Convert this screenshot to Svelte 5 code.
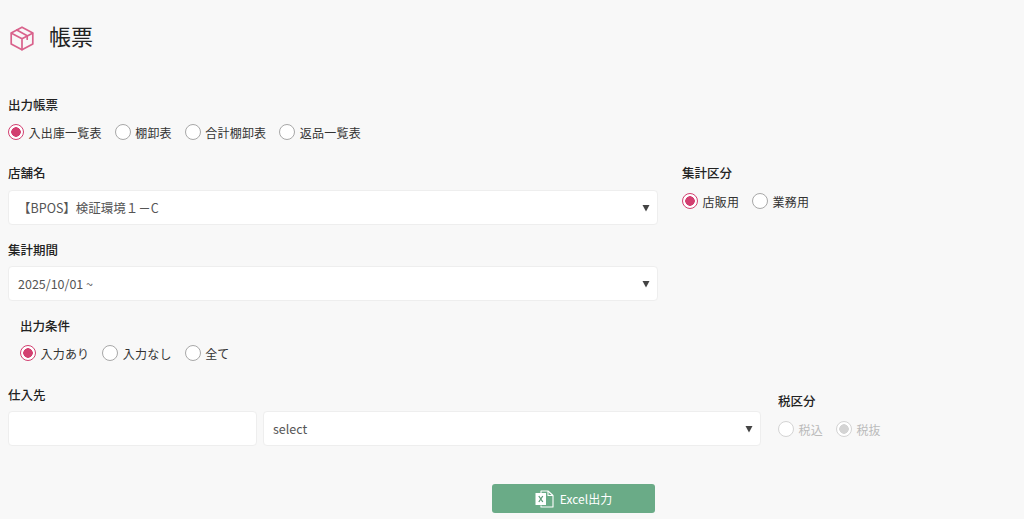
<script>
  let report = $state('inout');
  let kind = $state('store');
  let cond = $state('yes');
  let tax = $state('ex');

  const reports = [
    { id: 'inout', label: '入出庫一覧表' },
    { id: 'stock', label: '棚卸表' },
    { id: 'total', label: '合計棚卸表' },
    { id: 'return', label: '返品一覧表' }
  ];
  const kinds = [
    { id: 'store', label: '店販用' },
    { id: 'biz', label: '業務用' }
  ];
  const conds = [
    { id: 'yes', label: '入力あり' },
    { id: 'no', label: '入力なし' },
    { id: 'all', label: '全て' }
  ];
  const taxes = [
    { id: 'in', label: '税込' },
    { id: 'ex', label: '税抜' }
  ];
</script>

{#snippet radios(items, current, pick, disabled = false)}
  <div class="radios" class:disabled>
    {#each items as item}
      <button class="radio" {disabled} onclick={() => pick(item.id)}>
        <span class="dot" class:on={current === item.id}></span>
        <span>{item.label}</span>
      </button>
    {/each}
  </div>
{/snippet}

{#snippet picker(text, cls = '')}
  <div class="select {cls}">
    <span>{text}</span>
    <svg width="8" height="8" viewBox="0 0 8 8"><path d="M0.5 1h7L4 7.5z" fill="#444" /></svg>
  </div>
{/snippet}

<main>
  <header>
    <svg class="box" width="24" height="25" viewBox="0 0 24 25" fill="none" stroke="#d9628c" stroke-width="1.7" stroke-linejoin="round" stroke-linecap="round">
      <path d="M12 1.200 22.800 7v11L12 23.800 1.200 18V7z" />
      <path d="M1.500 7.200 12 12.800 22.500 7.200M12 12.800v10.800" />
      <path d="M6.800 4 17.200 9.800v3.400" />
    </svg>
    <h1>帳票</h1>
  </header>

  <section class="report">
    <div class="label">出力帳票</div>
    {@render radios(reports, report, (v) => (report = v))}
  </section>

  <section class="split">
    <div class="left">
      <div class="label">店舗名</div>
      {@render picker('【BPOS】検証環境１－C')}
      <div class="label period">集計期間</div>
      {@render picker('2025/10/01 ~', 'tight')}
      <div class="cond">
        <div class="label">出力条件</div>
        {@render radios(conds, cond, (v) => (cond = v))}
      </div>
    </div>
    <div class="right">
      <div class="label">集計区分</div>
      {@render radios(kinds, kind, (v) => (kind = v))}
    </div>
  </section>

  <section class="supplier">
    <div class="sup-main">
      <div class="label">仕入先</div>
      <div class="sup-row">
        <input type="text" />
        {@render picker('select', 'tight grow')}
      </div>
    </div>
    <div class="tax">
      <div class="label">税区分</div>
      {@render radios(taxes, tax, (v) => (tax = v), true)}
    </div>
  </section>

  <div class="actions">
    <button class="excel">
      <svg width="19" height="18" viewBox="0 0 19 18" fill="none" stroke="#fff" stroke-width="1.100" stroke-linejoin="round">
        <path d="M6 3V1h7l5 4.500V17H6v-1.500" />
        <path d="M13 1v4.500h5" />
        <rect x="0.500" y="3" width="10.500" height="12" fill="#fff" stroke="none" />
        <path d="M3.800 6l4 6M7.800 6l-4 6" stroke="#5c9a78" stroke-width="1.300" />
      </svg>
      <span>Excel出力</span>
    </button>
  </div>
</main>

<style>
  :global(body) {
    margin: 0;
    background: #f8f8f8;
    font-family: 'Noto Sans CJK JP', 'Noto Sans', sans-serif;
    color: #333;
  }
  main {
    height: 519px;
    overflow: hidden;
    padding: 0 8px;
    box-sizing: border-box;
  }
  header {
    display: flex;
    align-items: center;
    gap: 15px;
    height: 74px;
  }
  .box {
    margin: 2px 0 0 2px;
  }
  h1 {
    margin: -5px 0 0 0;
    font-size: 22px;
    font-weight: 400;
    line-height: 30px;
    color: #222;
  }
  .report {
    margin-top: 22px;
  }
  .label {
    font-size: 12.500px;
    font-weight: 500;
    line-height: 18px;
    color: #222;
  }
  .radios {
    display: flex;
    gap: 13px;
    height: 20px;
    margin-top: 8px;
  }
  .radio {
    display: flex;
    align-items: center;
    gap: 4.500px;
    padding: 0;
    border: 0;
    background: none;
    font: inherit;
    font-size: 12px;
    letter-spacing: 0.2px;
    color: #333;
    cursor: pointer;
  }
  .dot {
    box-sizing: border-box;
    width: 16px;
    height: 16px;
    border: 1.500px solid #a8a8a8;
    border-radius: 50%;
    background: #fff;
  }
  .dot.on {
    border-color: #d23f70;
    background: radial-gradient(circle, #d23f70 0 4.500px, #fff 5px);
  }
  .disabled .radio {
    color: #bbb;
    cursor: default;
  }
  .disabled .dot {
    border-color: #d4d4d4;
  }
  .disabled .dot.on {
    background: radial-gradient(circle, #d4d4d4 0 4.500px, #fff 5px);
  }
  .split {
    display: flex;
    margin-top: 22px;
  }
  .left {
    width: 650px;
  }
  .right {
    margin-left: 24px;
  }
  .right .radios {
    margin-top: 9px;
  }
  .select {
    display: flex;
    align-items: center;
    justify-content: space-between;
    box-sizing: border-box;
    height: 35px;
    margin-top: 8px;
    padding: 0 7px 0 9px;
    background: #fff;
    border: 1px solid #eee;
    border-radius: 4px;
    font-size: 12.500px;
    color: #555;
  }
  .tight {
    margin-top: 7px;
  }
  .period {
    margin-top: 16px;
  }
  .cond {
    margin: 16px 0 0 12px;
  }
  .supplier {
    display: flex;
    margin-top: 23px;
  }
  .sup-main {
    width: 753px;
  }
  .sup-row {
    display: flex;
    gap: 6px;
  }
  input {
    box-sizing: border-box;
    width: 249px;
    height: 35px;
    margin-top: 7px;
    background: #fff;
    border: 1px solid #eee;
    border-radius: 4px;
  }
  .grow {
    flex: 1;
  }
  .tax {
    margin: 6px 0 0 17px;
  }
  .tax .radios {
    margin-top: 9px;
  }
  .actions {
    display: flex;
    justify-content: center;
    margin-top: 38px;
    padding-left: 123px;
  }
  .excel {
    display: flex;
    align-items: center;
    justify-content: center;
    gap: 6px;
    width: 163px;
    height: 29px;
    border: 0;
    border-radius: 3px;
    background: #6aab87;
    color: #fff;
    font: inherit;
    font-size: 12px;
    cursor: pointer;
  }
</style>
